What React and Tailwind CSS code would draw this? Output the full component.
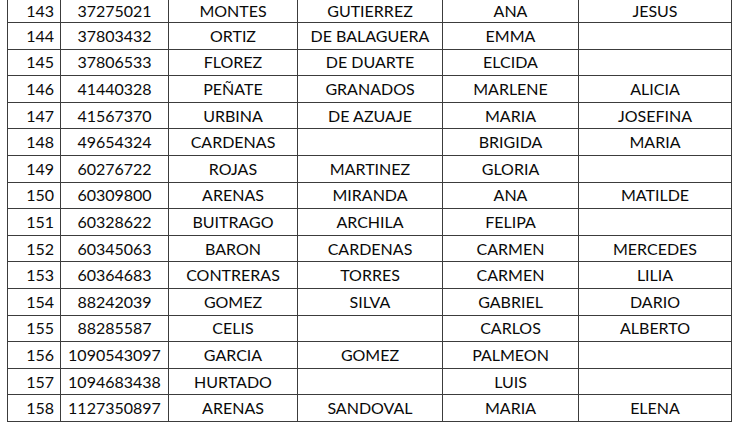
import React from 'react';

const rows = [
    ['143', '37275021', 'MONTES', 'GUTIERREZ', 'ANA', 'JESUS'],
    ['144', '37803432', 'ORTIZ', 'DE BALAGUERA', 'EMMA', ''],
    ['145', '37806533', 'FLOREZ', 'DE DUARTE', 'ELCIDA', ''],
    ['146', '41440328', 'PEÑATE', 'GRANADOS', 'MARLENE', 'ALICIA'],
    ['147', '41567370', 'URBINA', 'DE AZUAJE', 'MARIA', 'JOSEFINA'],
    ['148', '49654324', 'CARDENAS', '', 'BRIGIDA', 'MARIA'],
    ['149', '60276722', 'ROJAS', 'MARTINEZ', 'GLORIA', ''],
    ['150', '60309800', 'ARENAS', 'MIRANDA', 'ANA', 'MATILDE'],
    ['151', '60328622', 'BUITRAGO', 'ARCHILA', 'FELIPA', ''],
    ['152', '60345063', 'BARON', 'CARDENAS', 'CARMEN', 'MERCEDES'],
    ['153', '60364683', 'CONTRERAS', 'TORRES', 'CARMEN', 'LILIA'],
    ['154', '88242039', 'GOMEZ', 'SILVA', 'GABRIEL', 'DARIO'],
    ['155', '88285587', 'CELIS', '', 'CARLOS', 'ALBERTO'],
    ['156', '1090543097', 'GARCIA', 'GOMEZ', 'PALMEON', ''],
    ['157', '1094683438', 'HURTADO', '', 'LUIS', ''],
    ['158', '1127350897', 'ARENAS', 'SANDOVAL', 'MARIA', 'ELENA'],
];

const App = () => {
    return (
        <div className="w-[747px] h-[427px] bg-white overflow-hidden" style={{ fontFamily: 'Lato, "Open Sans", sans-serif' }}>
            <div className="ml-[7px] w-[725px] border-l border-[#3c3c3c] text-[16px] text-[#0a0a0a]">
                {rows.map((r, i) => (
                    <div
                        key={r[0]}
                        className={`flex border-b border-[#3c3c3c] ${i === 0 ? 'h-[23px]' : 'h-[26.6px]'}`}
                    >
                        <div className="w-[53px] shrink-0 border-r border-[#3c3c3c] flex items-center justify-end pr-[6px]">{r[0]}</div>
                        <div className="w-[108px] shrink-0 border-r border-[#3c3c3c] flex items-center justify-center">{r[1]}</div>
                        <div className="w-[129px] shrink-0 border-r border-[#3c3c3c] flex items-center justify-center">{r[2]}</div>
                        <div className="w-[145px] shrink-0 border-r border-[#3c3c3c] flex items-center justify-center">{r[3]}</div>
                        <div className="w-[136px] shrink-0 border-r border-[#3c3c3c] flex items-center justify-center">{r[4]}</div>
                        <div className="w-[153px] shrink-0 border-r border-[#3c3c3c] flex items-center justify-center">{r[5]}</div>
                    </div>
                ))}
            </div>
        </div>
    );
};

export default App;
